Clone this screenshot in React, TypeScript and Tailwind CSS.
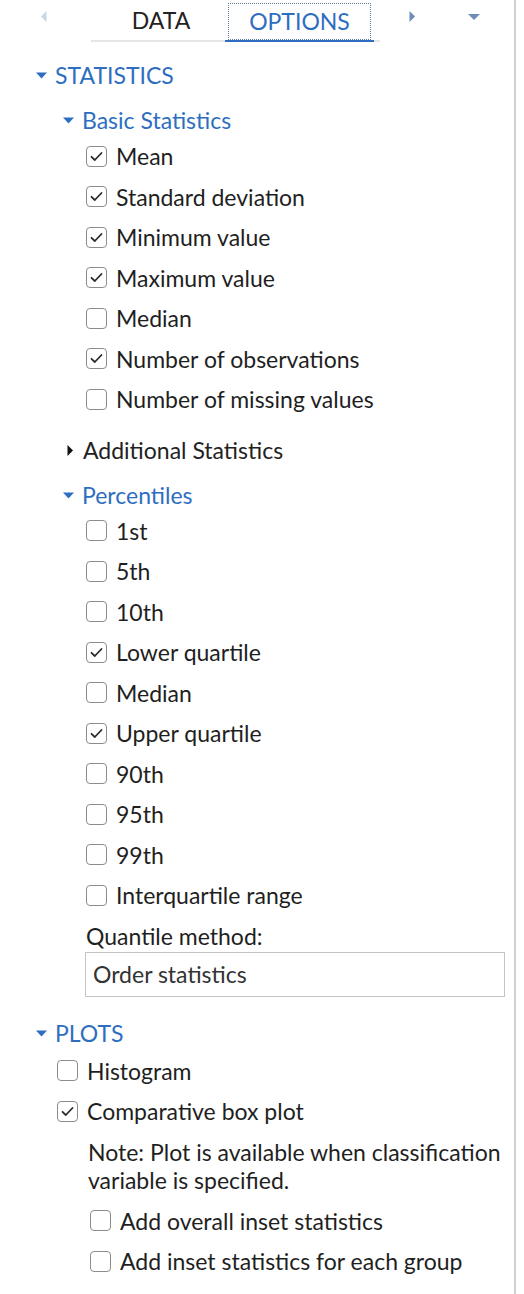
import React from 'react';

const BLUE = 'text-[#2d6ec0]';

function DownTri({ className = '' }: { className?: string }) {
  return (
    <svg width="11" height="7" viewBox="0 0 11 7" className={className}>
      <path d="M0 0.5 L11 0.5 L5.5 6.5 Z" fill="currentColor" />
    </svg>
  );
}

function RightTri({ className = '' }: { className?: string }) {
  return (
    <svg width="6" height="11" viewBox="0 0 6 11" className={className}>
      <path d="M0.5 0 L0.5 11 L6 5.5 Z" fill="currentColor" />
    </svg>
  );
}

function Box({ checked }: { checked: boolean }) {
  return (
    <span className="flex h-[21px] w-[21px] shrink-0 items-center justify-center rounded-[4px] border-[1.5px] border-[#8c8c8c] bg-white">
      {checked && (
        <svg width="13" height="11" viewBox="0 0 13 11">
          <path d="M1.5 5.8 L4.8 9 L11.5 2" fill="none" stroke="#2b2b2b" strokeWidth="1.8" strokeLinecap="round" strokeLinejoin="round" />
        </svg>
      )}
    </span>
  );
}

function Check({ label, checked = false, indent }: { label: string; checked?: boolean; indent: string }) {
  return (
    <div className={`flex h-[40.5px] items-center gap-[9px] ${indent}`}>
      <Box checked={checked} />
      <span className="whitespace-nowrap">{label}</span>
    </div>
  );
}

function Header({ label, indent, open = true }: { label: string; indent: string; open?: boolean }) {
  return (
    <div className={`flex h-[30px] items-center ${indent}`}>
      {open ? (
        <span className={`flex w-[19px] ${BLUE}`}>
          <DownTri />
        </span>
      ) : (
        <span className="flex w-[16px] text-[#111]">
          <RightTri />
        </span>
      )}
      <span className={`${open ? BLUE : 'text-[#222]'} whitespace-nowrap`}>{label}</span>
    </div>
  );
}

const basic: [string, boolean][] = [
  ['Mean', true],
  ['Standard deviation', true],
  ['Minimum value', true],
  ['Maximum value', true],
  ['Median', false],
  ['Number of observations', true],
  ['Number of missing values', false],
];

const percentiles: [string, boolean][] = [
  ['1st', false],
  ['5th', false],
  ['10th', false],
  ['Lower quartile', true],
  ['Median', false],
  ['Upper quartile', true],
  ['90th', false],
  ['95th', false],
  ['99th', false],
  ['Interquartile range', false],
];

export default function App() {
  return (
    <div className="min-h-[1294px] w-[524px] bg-white font-['Lato',sans-serif] text-[23px] text-[#1f1f1f]">
      <div className="min-h-[1294px] w-[516px] border-r-2 border-[#d0d0d0]">
        {/* Tabs */}
        <div className="flex h-[42px] items-start">
          <span className="ml-[41px] mt-[11px] flex rotate-180 text-[#c9d6e6]">
            <RightTri />
          </span>
          <div className="ml-[44px] mt-0 flex h-[42px] w-[289px] items-start border-b-2 border-[#e6e6e6]">
            <div className="flex h-[40px] w-[134px] items-center justify-center pl-[6px] pt-[1px] text-[#222]">DATA</div>
            <div className="flex h-[42px] w-[149px] flex-col">
              <div className="mx-[3px] mt-[3px] flex h-[37px] items-center justify-center border border-dotted border-[#5b7fa8] text-[#2d6ec0]">
                OPTIONS
              </div>
              <div className="h-[3px] bg-[#2f6dc3]" />
            </div>
          </div>
          <span className="ml-[29px] mt-[11px] flex text-[#6d8db8]">
            <RightTri />
          </span>
          <span className="ml-[53px] mt-[14px] flex text-[#6d8db8]">
            <svg width="12" height="6" viewBox="0 0 12 6">
              <path d="M0 0 L12 0 L6 6 Z" fill="currentColor" />
            </svg>
          </span>
        </div>

        {/* STATISTICS */}
        <div className="mt-[18px]">
          <Header label="STATISTICS" indent="pl-[36px]" />
        </div>
        <div className="mt-[15px]">
          <Header label="Basic Statistics" indent="pl-[63px]" />
        </div>
        <div className="mt-px">
          {basic.map(([l, c]) => (
            <Check key={l} label={l} checked={c} indent="pl-[86px]" />
          ))}
        </div>
        <div className="mt-[16px]">
          <Header label="Additional Statistics" indent="pl-[67px]" open={false} />
        </div>
        <div className="mt-[15px]">
          <Header label="Percentiles" indent="pl-[63px]" />
        </div>
        <div>
          {percentiles.map(([l, c], i) => (
            <Check key={i} label={l} checked={c} indent="pl-[86px]" />
          ))}
        </div>
        <div className="mt-[6px] flex h-[30px] items-center pl-[86px]">Quantile method:</div>
        <div className="ml-[85px] mr-[9px] flex h-[45px] items-center border border-[#c4c4c4] px-[7px] text-[#333]">
          Order statistics
        </div>

        {/* PLOTS */}
        <div className="mt-[22px]">
          <Header label="PLOTS" indent="pl-[36px]" />
        </div>
        <div className="mt-[2px]">
          <Check label="Histogram" indent="pl-[57px]" />
          <Check label="Comparative box plot" checked indent="pl-[57px]" />
        </div>
        <div className="mt-[6px] pl-[88px] leading-[28px] whitespace-nowrap">
          Note: Plot is available when classification
          <br />
          variable is specified.
        </div>
        <div className="mt-[7px]">
          <Check label="Add overall inset statistics" indent="pl-[90px]" />
          <Check label="Add inset statistics for each group" indent="pl-[90px]" />
        </div>
      </div>
    </div>
  );
}
